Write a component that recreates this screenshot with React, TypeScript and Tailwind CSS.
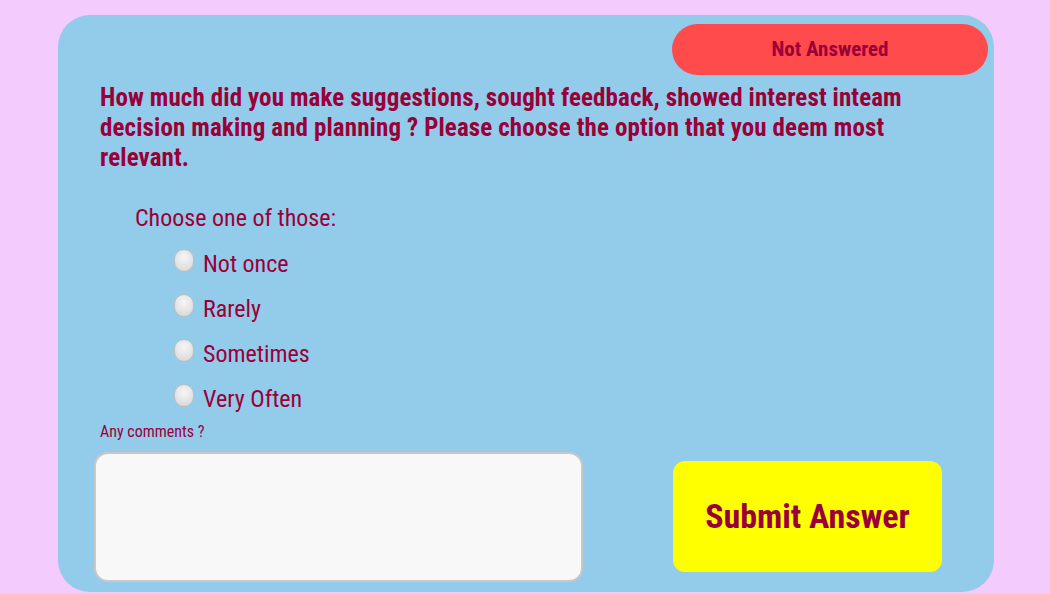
import React from "react";

const options = ["Not once", "Rarely", "Sometimes", "Very Often"];

export default function App() {
  return (
    <div className="w-[1050px] h-[594px] bg-[#f3cbfd] overflow-hidden font-[Roboto,'Liberation_Sans',sans-serif] font-stretch-condensed">
      <div className="flex pl-[58px] pt-[15px]">
        <div className="w-[936px] h-[577px] bg-[#93cbeb] rounded-[32px] flex flex-col px-[36px] pt-[9px] text-[#9a0038]">
          <div className="flex justify-end mr-[-30px]">
            <div className="w-[316px] h-[51px] rounded-full bg-[#ff4b4b] flex items-center justify-center text-[21px] font-bold">
              Not Answered
            </div>
          </div>
          <div className="pl-[6px] pr-[40px] mt-[8px] text-[25px] leading-[30px] font-bold tracking-[0.11px]">
            How much did you make suggestions, sought feedback, showed interest inteam decision making and planning ? Please choose the option that you deem most relevant.
          </div>
          <div className="pl-[41px] mt-[30px] text-[24px] leading-[30px]">Choose one of those:</div>
          <div className="flex flex-col pl-[80px] mt-[16px] gap-[15px]">
            {options.map((o) => (
              <label key={o} className="flex items-center h-[30px] text-[24px]">
                <span className="w-[20px] h-[23px] rounded-full border border-[#bdbdbd] bg-[radial-gradient(circle_at_50%_35%,#f6f6f6,#d4d4d4)] mt-[-8px] mr-[9px] shrink-0" />
                <span>{o}</span>
              </label>
            ))}
          </div>
          <div className="pl-[6px] mt-[9px] text-[16px] leading-[18px]">Any comments ?</div>
          <div className="flex items-start mt-[11px]">
            <textarea className="w-[489px] h-[130px] rounded-[14px] border-2 border-[#c8c8c8] bg-[#f8f8f8] resize-none outline-none" />
            <button className="ml-[90px] mt-[9px] w-[269px] h-[111px] rounded-[12px] bg-[#ffff00] text-[34px] font-bold text-[#9a0038]">
              Submit Answer
            </button>
          </div>
        </div>
      </div>
    </div>
  );
}
